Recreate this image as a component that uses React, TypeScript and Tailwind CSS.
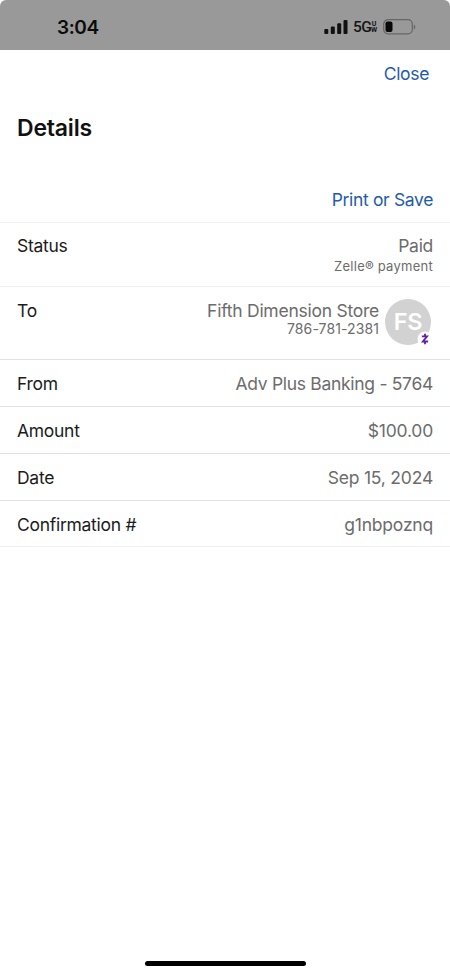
import type { ReactNode } from "react";

function StatusBar() {
  return (
    <header className="flex h-[50px] shrink-0 items-start justify-between rounded-t-[6px] bg-[#999999] pt-[17px] pr-[34px] pl-[57px]">
      <span className="text-[19px] leading-[21px] font-semibold tracking-[-0.4px] text-[#0b0b0b]">3:04</span>
      <div className="flex h-[20px] items-center">
        <svg width="24" height="16" viewBox="0 0 24 16" fill="#111111" className="mr-[5px]">
          <rect x="0.3" y="10" width="4" height="5" rx="1.1" />
          <rect x="6.8" y="7.5" width="4" height="7.5" rx="1.1" />
          <rect x="13.2" y="4.2" width="4" height="10.8" rx="1.1" />
          <rect x="19.5" y="1" width="4" height="14" rx="1.1" />
        </svg>
        <span className="w-[18px] font-['Roboto','Inter',sans-serif] text-[15.5px] leading-[20px] font-medium tracking-[-0.6px] text-[#151515]">5G</span>
        <span className="mr-[6px] flex w-[6px] flex-col items-center font-['Roboto','Inter',sans-serif] text-[7px] leading-[6px] font-bold text-[#151515]">
          <span>U</span>
          <span>W</span>
        </span>
        <svg width="33" height="16" viewBox="0 0 33 16">
          <rect x="0.7" y="0.7" width="28.6" height="14.2" rx="4.4" fill="none" stroke="#666666" strokeWidth="1.2" />
          <rect x="2.5" y="2.6" width="7" height="10.4" rx="2" fill="#080808" />
          <path d="M30.8 5.4c2 .9 2 4 0 4.9z" fill="#666666" />
        </svg>
      </div>
    </header>
  );
}

function ZelleMark() {
  return (
    <svg width="16" height="16" viewBox="0 0 16 16" className="absolute -right-[2px] -bottom-[2px]">
      <circle cx="8" cy="8" r="7.5" fill="#ffffff" />
      <path d="M4.9 5.3h5.2L5.8 10.5h5.3M8 2.8v2.5M8 10.5v2.7" fill="none" stroke="#5f1fa8" strokeWidth="1.8" />
    </svg>
  );
}

function Row({ label, height, children }: { label: string; height: string; children: ReactNode }) {
  return (
    <div className={`flex items-start justify-between border-b pt-[12px] pr-[17px] pl-[17px] ${height}`}>
      <dt className="text-[17.5px] leading-[24px] tracking-[-0.28px] text-[#1b1b1b]">{label}</dt>
      <dd className="text-right text-[17.5px] leading-[24px] tracking-[-0.3px] text-[#6c6c6c]">{children}</dd>
    </div>
  );
}

export default function App() {
  return (
    <div className="flex h-[975px] w-[450px] flex-col overflow-hidden bg-white font-['Inter','Liberation_Sans',sans-serif]">
      <StatusBar />
      <div className="flex h-[47px] items-center justify-end pr-[21px]">
        <button className="text-[17.5px] leading-[24px] tracking-[-0.35px] text-[#1f5bac]">Close</button>
      </div>
      <h1 className="mt-[15px] pl-[17px] text-[23px] leading-[32px] font-semibold tracking-[-0.2px] text-[#111111]">Details</h1>
      <div className="mt-[44px] flex h-[35px] items-start justify-end border-b border-[#eeeeee] pr-[17px]">
        <button className="text-[17.5px] leading-[24px] tracking-[-0.35px] text-[#1f5bac]">Print or Save</button>
      </div>
      <dl className="-mt-px">
        <Row label="Status" height="h-[65px] border-[#f0f0f0]">
          <div>Paid</div>
          <div className="text-[13px] leading-[16px] tracking-[0.26px]">Zelle® payment</div>
        </Row>
        <Row label="To" height="h-[73px] border-[#e2e2e2]">
          <div className="flex gap-[6px]">
            <div>
              <div className="tracking-[-0.25px]">Fifth Dimension Store</div>
              <div className="text-[14px] leading-[12px] tracking-[0.1px]">786-781-2381</div>
            </div>
            <div className="relative mr-[2px] flex size-[46px] items-center justify-center rounded-full bg-[#d2d2d2] text-[23.5px] font-semibold text-white">
              FS
              <ZelleMark />
            </div>
          </div>
        </Row>
        <Row label="From" height="h-[47px] border-[#e2e2e2]">Adv Plus Banking - 5764</Row>
        <Row label="Amount" height="h-[47px] border-[#e2e2e2]"><span className="tracking-[-0.2px]">$100.00</span></Row>
        <Row label="Date" height="h-[47px] border-[#e2e2e2]"><span className="tracking-[-0.2px]">Sep 15, 2024</span></Row>
        <Row label="Confirmation #" height="h-[46px] border-[#f0f0f0]"><span className="tracking-[-0.2px]">g1nbpoznq</span></Row>
      </dl>
      <div className="mt-auto mb-[9px] h-[5px] w-[161px] self-center rounded-full bg-black" />
    </div>
  );
}
